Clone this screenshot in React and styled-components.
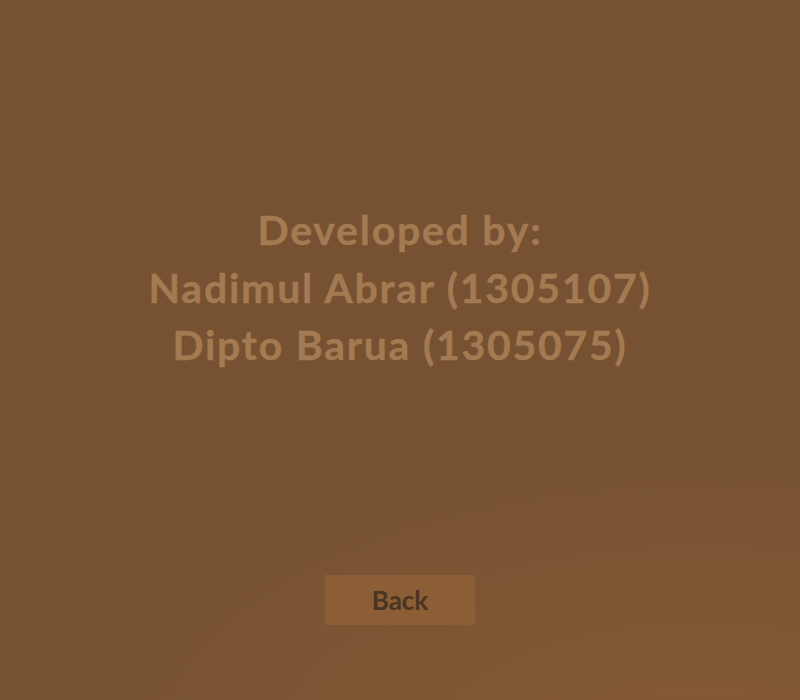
import React from 'react';
import styled, { createGlobalStyle } from 'styled-components';

const GlobalStyle = createGlobalStyle`
  html, body {
    margin: 0;
    padding: 0;
  }
  body {
    font-family: Lato, "Open Sans", sans-serif;
  }
`;

const Screen = styled.div`
  width: 800px;
  height: 700px;
  box-sizing: border-box;
  display: flex;
  flex-direction: column;
  align-items: center;
  padding-top: 201px;
  background-color: #765232;
  background-image: radial-gradient(
    640px 320px at 700px 760px,
    #865b36 0%,
    #7e5634 55%,
    #785333 90%,
    #765232 100%
  );
`;

const Credits = styled.div`
  display: flex;
  flex-direction: column;
  align-items: center;
  color: #a37a52;
  font-size: 41px;
  font-weight: 700;
  line-height: 57.5px;
  letter-spacing: 1.75px;
  -webkit-text-stroke: 0.4px #a37a52;
`;

const Line = styled.div`
  white-space: nowrap;
`;

const BackButton = styled.button`
  margin-top: 201px;
  width: 150px;
  height: 50px;
  border: none;
  background: #8b5e36;
  color: #4a3422;
  font-family: Lato, "Open Sans", sans-serif;
  font-size: 26px;
  font-weight: 700;
  cursor: pointer;
`;

const App = () => {
  return (
    <Screen>
      <GlobalStyle />
      <Credits>
        <Line>Developed by:</Line>
        <Line>Nadimul Abrar (1305107)</Line>
        <Line>Dipto Barua (1305075)</Line>
      </Credits>
      <BackButton>Back</BackButton>
    </Screen>
  );
};

export default App;
